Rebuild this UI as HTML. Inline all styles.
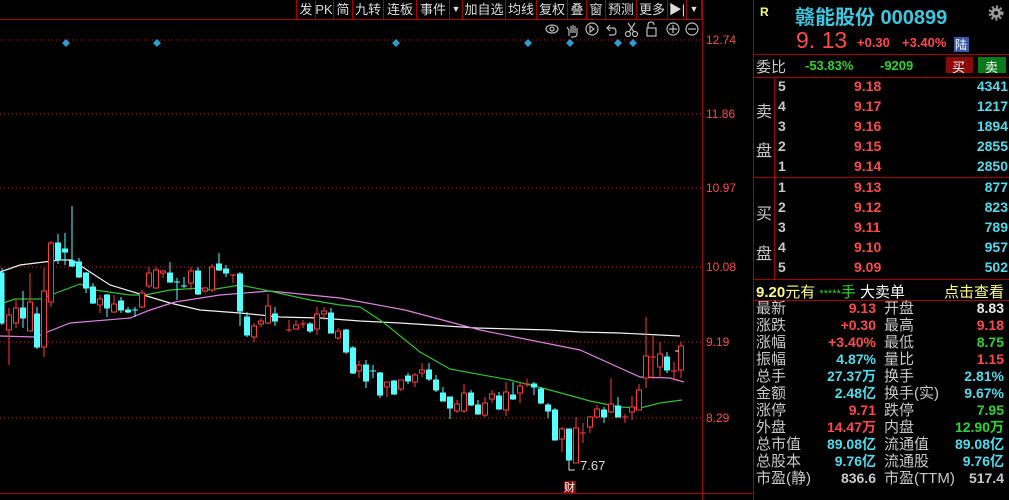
<!DOCTYPE html>
<html><head><meta charset="utf-8"><style>
body{margin:0;background:#000;width:1009px;height:500px;overflow:hidden;position:relative;font-family:"Liberation Sans","Noto Sans CJK SC",sans-serif;}
.tb{position:absolute;top:0;height:19px;border-right:1px solid #a00;color:#ddd;font-size:13px;line-height:19px;text-align:center;}
.abs{position:absolute;white-space:nowrap;}
.hl{position:absolute;left:753px;width:256px;height:1px;background:#a00;}
.r{color:#ff4a4a}.g{color:#2ed52e}.c{color:#4fdcec}.w{color:#e8e8e8}.y{color:#ffff80}.gr{color:#c8c8c8}
.row{position:absolute;left:756px;width:250px;height:17px;font-size:15px;line-height:17px;}
.row span{position:absolute;white-space:nowrap;}
.row span.v{font-weight:bold;font-size:14px;}
.row span.a{right:130px}
.row span.b{right:2px}
.row span.l2{left:128px}
.ob{position:absolute;left:776px;width:232px;height:20px;font-size:14px;font-weight:bold;line-height:20px;}
.ob span{position:absolute;}
</style></head><body>
<svg width="1009" height="500" style="position:absolute;left:0;top:0">
<g stroke="#b02020" stroke-dasharray="1,3" stroke-width="1">
<line x1="0" y1="40" x2="702" y2="40"/><line x1="0" y1="114" x2="702" y2="114"/><line x1="0" y1="188" x2="702" y2="188"/><line x1="0" y1="267" x2="702" y2="267"/><line x1="0" y1="342" x2="702" y2="342"/><line x1="0" y1="418" x2="702" y2="418"/>
</g>
<line x1="0" y1="19.5" x2="702" y2="19.5" stroke="#a00"/>
<line x1="702.5" y1="0" x2="702.5" y2="500" stroke="#a00"/>
<line x1="753.5" y1="0" x2="753.5" y2="500" stroke="#a00"/>
<line x1="0" y1="493.5" x2="753" y2="493.5" stroke="#a00"/>
<g fill="none" stroke-width="1.2">
<polyline stroke="#f0f0f0" points="0,272 20,265 60,260 72,260 90,272 110,285 150,297 170,303 200,310 240,313 280,317 320,318 360,321 400,323 477,328 550,330 580,332 620,333 680,336"/>
<polyline stroke="#e080e0" points="0,336 35,337 45,333 70,323 130,318 150,310 175,302 220,295 270,291 310,295 340,298 405,310 480,330 580,350 620,368 640,377 670,378 684,382"/>
<polyline stroke="#2fc02f" points="0,304 15,299 40,299 80,284 95,290 130,295 145,295 170,290 200,288 210,290 240,285 265,290 310,300 340,305 360,307 383,322 420,352 450,369 510,380 550,390 590,401 620,407 640,408 660,403 682,400"/>
</g>
<g id="c" stroke-width="1">
<g stroke="#54ffff" fill="#54ffff">
<line x1="2" y1="268" x2="2" y2="325"/><rect x="0" y="273" width="4" height="50"/>
<line x1="23" y1="291" x2="23" y2="328"/><rect x="20.5" y="308" width="5" height="10"/>
<line x1="37" y1="307" x2="37" y2="349"/><rect x="34.5" y="314" width="5" height="33"/>
<line x1="58" y1="234" x2="58" y2="264"/><rect x="55.5" y="243" width="5" height="17"/>
<line x1="65" y1="233" x2="65" y2="265"/><rect x="62.5" y="249" width="5" height="3"/>
<line x1="72" y1="206" x2="72" y2="267"/><rect x="69.5" y="261" width="5" height="5"/>
<line x1="79" y1="258" x2="79" y2="278"/><rect x="76.5" y="262" width="5" height="15"/>
<line x1="86" y1="272" x2="86" y2="293"/><rect x="83.5" y="273" width="5" height="15"/>
<line x1="93" y1="283" x2="93" y2="304"/><rect x="90.5" y="287" width="5" height="16"/>
<line x1="107" y1="294" x2="107" y2="317"/><rect x="104.5" y="295" width="5" height="13"/>
<line x1="121" y1="297" x2="121" y2="313"/><rect x="118.5" y="301" width="5" height="9"/>
<line x1="128" y1="307" x2="128" y2="313"/><rect x="125.5" y="310" width="5" height="2"/>
<line x1="135" y1="307" x2="135" y2="317"/><line x1="132" y1="310" x2="138" y2="310"/>
<line x1="170" y1="262" x2="170" y2="283"/><rect x="167.5" y="273" width="5" height="9"/>
<line x1="177" y1="278" x2="177" y2="300"/><line x1="174" y1="282" x2="180" y2="282"/>
<line x1="184" y1="277" x2="184" y2="288"/><line x1="181" y1="286" x2="187" y2="286"/>
<line x1="198" y1="267" x2="198" y2="295"/><rect x="195.5" y="271" width="5" height="23"/>
<line x1="219" y1="253" x2="219" y2="271"/><rect x="216.5" y="264" width="5" height="6"/>
<line x1="226" y1="265" x2="226" y2="277"/><rect x="223.5" y="269" width="5" height="4"/>
<line x1="240" y1="272" x2="240" y2="326"/><rect x="237.5" y="274" width="5" height="37"/>
<line x1="247" y1="312" x2="247" y2="337"/><rect x="244.5" y="317" width="5" height="18"/>
<line x1="275" y1="307" x2="275" y2="326"/><rect x="272.5" y="314" width="5" height="7"/>
<line x1="310" y1="322" x2="310" y2="333"/><rect x="307.5" y="324" width="5" height="7"/>
<line x1="331" y1="308" x2="331" y2="333"/><rect x="328.5" y="313" width="5" height="20"/>
<line x1="346" y1="329" x2="346" y2="354"/><rect x="343.5" y="330" width="5" height="22"/>
<line x1="353" y1="346" x2="353" y2="374"/><rect x="350.5" y="348" width="5" height="25"/>
<line x1="366" y1="360" x2="366" y2="388"/><rect x="363.5" y="365" width="5" height="16"/>
<line x1="373" y1="365" x2="373" y2="378"/><line x1="370" y1="371" x2="376" y2="371"/>
<line x1="380" y1="372" x2="380" y2="398"/><rect x="377.5" y="373" width="5" height="22"/>
<line x1="394" y1="380" x2="394" y2="395"/><rect x="391.5" y="381" width="5" height="13"/>
<line x1="408" y1="373" x2="408" y2="384"/><rect x="405.5" y="376" width="5" height="5"/>
<line x1="429" y1="363" x2="429" y2="381"/><rect x="426.5" y="370" width="5" height="9"/>
<line x1="436" y1="375" x2="436" y2="392"/><rect x="433.5" y="380" width="5" height="10"/>
<line x1="443" y1="387" x2="443" y2="401"/><rect x="440.5" y="393" width="5" height="8"/>
<line x1="450" y1="397" x2="450" y2="419"/><rect x="447.5" y="397" width="5" height="11"/>
<line x1="471" y1="390" x2="471" y2="406"/><rect x="468.5" y="393" width="5" height="12"/>
<line x1="478" y1="400" x2="478" y2="415"/><rect x="475.5" y="405" width="5" height="9"/>
<line x1="499" y1="392" x2="499" y2="410"/><rect x="496.5" y="396" width="5" height="13"/>
<line x1="513" y1="382" x2="513" y2="400"/><rect x="510.5" y="395" width="5" height="4"/>
<line x1="534" y1="382" x2="534" y2="395"/><rect x="531.5" y="384" width="5" height="3"/>
<line x1="541" y1="387" x2="541" y2="404"/><rect x="538.5" y="389" width="5" height="14"/>
<line x1="548" y1="403" x2="548" y2="418"/><rect x="545.5" y="405" width="5" height="6"/>
<line x1="555" y1="408" x2="555" y2="440"/><rect x="552.5" y="410" width="5" height="30"/>
<line x1="569" y1="429" x2="569" y2="470"/><rect x="566.5" y="429" width="5" height="31"/>
<line x1="604" y1="407" x2="604" y2="423"/><rect x="601.5" y="410" width="5" height="7"/>
<line x1="618" y1="397" x2="618" y2="417"/><rect x="615.5" y="406" width="5" height="11"/>
<line x1="667" y1="352" x2="667" y2="373"/><rect x="664.5" y="357" width="5" height="13"/>
</g>
<g stroke="#ff3c3c" fill="#000">
<line x1="9" y1="308" x2="9" y2="365"/><rect x="6.5" y="315" width="5" height="15"/>
<line x1="16" y1="300" x2="16" y2="328"/><rect x="13.5" y="308" width="5" height="15"/>
<line x1="30" y1="273" x2="30" y2="331"/><rect x="27.5" y="302" width="5" height="29"/>
<line x1="44" y1="268" x2="44" y2="357"/><rect x="41.5" y="291" width="5" height="56"/>
<line x1="51" y1="241" x2="51" y2="307"/><rect x="48.5" y="243" width="5" height="59"/>
<line x1="100" y1="295" x2="100" y2="313"/><rect x="97.5" y="299" width="5" height="6"/>
<line x1="114" y1="295" x2="114" y2="313"/><rect x="111.5" y="304" width="5" height="8"/>
<line x1="142" y1="290" x2="142" y2="308"/><rect x="139.5" y="293" width="5" height="14"/>
<line x1="149" y1="267" x2="149" y2="288"/><rect x="146.5" y="273" width="5" height="13"/>
<line x1="156" y1="267" x2="156" y2="289"/><rect x="153.5" y="270" width="5" height="18"/>
<line x1="163" y1="270" x2="163" y2="278"/><rect x="160.5" y="271" width="5" height="2"/>
<line x1="191" y1="267" x2="191" y2="290"/><rect x="188.5" y="271" width="5" height="12"/>
<line x1="205" y1="287" x2="205" y2="293"/><rect x="202.5" y="288" width="5" height="3"/>
<line x1="212" y1="264" x2="212" y2="292"/><rect x="209.5" y="267" width="5" height="23"/>
<line x1="233" y1="274" x2="233" y2="283"/><line x1="230" y1="275" x2="236" y2="275"/>
<line x1="254" y1="323" x2="254" y2="342"/><rect x="251.5" y="326" width="5" height="11"/>
<line x1="261" y1="318" x2="261" y2="327"/><rect x="258.5" y="321" width="5" height="3"/>
<line x1="268" y1="294" x2="268" y2="324"/><rect x="265.5" y="306" width="5" height="17"/>
<line x1="289" y1="320" x2="289" y2="332"/><line x1="286" y1="330" x2="292" y2="330"/>
<line x1="296" y1="320" x2="296" y2="330"/><rect x="293.5" y="325" width="5" height="4"/>
<line x1="303" y1="320" x2="303" y2="328"/><line x1="300" y1="324" x2="306" y2="324"/>
<line x1="317" y1="307" x2="317" y2="335"/><rect x="314.5" y="314" width="5" height="15"/>
<line x1="324" y1="307" x2="324" y2="320"/><rect x="321.5" y="311" width="5" height="3"/>
<line x1="338" y1="328" x2="338" y2="340"/><rect x="335.5" y="331" width="5" height="7"/>
<line x1="359" y1="361" x2="359" y2="378"/><rect x="356.5" y="365" width="5" height="6"/>
<line x1="387" y1="382" x2="387" y2="397"/><rect x="384.5" y="382" width="5" height="5"/>
<line x1="401" y1="380" x2="401" y2="391"/><rect x="398.5" y="380" width="5" height="9"/>
<line x1="415" y1="373" x2="415" y2="387"/><rect x="412.5" y="375" width="5" height="7"/>
<line x1="422" y1="363" x2="422" y2="377"/><rect x="419.5" y="370" width="5" height="3"/>
<line x1="457" y1="400" x2="457" y2="413"/><rect x="454.5" y="404" width="5" height="7"/>
<line x1="464" y1="384" x2="464" y2="413"/><rect x="461.5" y="393" width="5" height="18"/>
<line x1="485" y1="397" x2="485" y2="417"/><rect x="482.5" y="403" width="5" height="12"/>
<line x1="492" y1="390" x2="492" y2="403"/><rect x="489.5" y="394" width="5" height="5"/>
<line x1="506" y1="382" x2="506" y2="416"/><rect x="503.5" y="392" width="5" height="18"/>
<line x1="520" y1="383" x2="520" y2="403"/><rect x="517.5" y="386" width="5" height="7"/>
<line x1="527" y1="379" x2="527" y2="387"/><line x1="524" y1="384" x2="530" y2="384"/>
<line x1="562" y1="427" x2="562" y2="452"/><rect x="559.5" y="429" width="5" height="10"/>
<line x1="576" y1="417" x2="576" y2="463"/><rect x="573.5" y="428" width="5" height="35"/>
<line x1="583" y1="423" x2="583" y2="443"/><line x1="580" y1="433" x2="586" y2="433"/>
<line x1="590" y1="416" x2="590" y2="433"/><rect x="587.5" y="417" width="5" height="10"/>
<line x1="597" y1="405" x2="597" y2="418"/><rect x="594.5" y="409" width="5" height="8"/>
<line x1="611" y1="378" x2="611" y2="413"/><rect x="608.5" y="404" width="5" height="8"/>
<line x1="625" y1="414" x2="625" y2="423"/><line x1="622" y1="417" x2="628" y2="417"/>
<line x1="632" y1="396" x2="632" y2="420"/><rect x="629.5" y="407" width="5" height="5"/>
<line x1="639" y1="384" x2="639" y2="410"/><rect x="636.5" y="390" width="5" height="20"/>
<line x1="646" y1="317" x2="646" y2="388"/><rect x="643.5" y="356" width="5" height="22"/>
<line x1="653" y1="336" x2="653" y2="379"/><line x1="650" y1="357" x2="656" y2="357"/>
<line x1="660" y1="342" x2="660" y2="378"/><rect x="657.5" y="354" width="5" height="13"/>
<line x1="674" y1="362" x2="674" y2="381"/><line x1="671" y1="371" x2="677" y2="371"/>
<line x1="681" y1="342" x2="681" y2="378"/><rect x="678.5" y="346" width="5" height="24"/>
</g>
<line x1="675" y1="351" x2="679" y2="351" stroke="#ffff60"/>
</g>
<polyline points="569,462 569,470 575,470" fill="none" stroke="#ddd"/>
<g fill="#2e9ed0">
<path d="M66,39l4,4-4,4-4-4z"/><path d="M157,39l4,4-4,4-4-4z"/><path d="M396,39l4,4-4,4-4-4z"/><path d="M528,39l4,4-4,4-4-4z"/><path d="M570,39l4,4-4,4-4-4z"/><path d="M618,39l4,4-4,4-4-4z"/><path d="M633,39l4,4-4,4-4-4z"/>
</g>
<g fill="none" stroke="#bbb" stroke-width="1.2">
<ellipse cx="552" cy="29" rx="6" ry="4"/><circle cx="552" cy="29" r="2"/>
<path d="M569,36 v-6 l-2,-3 M571,26v7 M573,25v8 M575,26v7 M577,28v6 q0,3 -4,3 h-2"/>
<circle cx="592" cy="29" r="6"/><path d="M590,26 l4,3 -4,3z"/>
<path d="M610,25 l-3,3 3,3 M607,28 h6 q3,0 3,4 q0,3 -3,3 h-4"/>
<circle cx="628" cy="34" r="2.5"/><circle cx="635" cy="34" r="2.5"/><path d="M629,32 l6,-9 M634,32 l-6,-9"/>
<rect x="647" y="28" width="9" height="8"/><path d="M648,28 v-3 q0,-3 3,-3 q3,0 3,3"/>
<circle cx="673" cy="29" r="6"/><path d="M669,29h8M673,25v8"/>
<circle cx="692" cy="29" r="6"/><path d="M688,29h8"/>
</g>
<rect x="564" y="481" width="12" height="12" fill="#7a0d0d"/>
<g fill="#999"><circle cx="996" cy="13" r="5"/></g>
<circle cx="996" cy="13" r="6" fill="none" stroke="#999" stroke-width="3" stroke-dasharray="2,2"/>
<circle cx="996" cy="13" r="2" fill="#000"/>
<rect x="946" y="57" width="27" height="16" fill="#8a0a0a"/><rect x="978" y="57" width="28" height="16" fill="#0a7a1a"/>
<rect x="954" y="37" width="15" height="15" fill="#3a5aa8"/>
<line x1="774.5" y1="78" x2="774.5" y2="279" stroke="#a00"/>
</svg>
<div class="abs w" style="left:580px;top:458px;font-size:13px;color:#ddd">7.67</div>
<div class="abs" style="left:564px;top:479px;font-size:11px;color:#fff">财</div>
<div class="tb" style="left:296px;width:18px;border-left:1px solid #a00">发</div>
<div class="tb" style="left:315px;width:18px">PK</div>
<div class="tb" style="left:334px;width:18px">简</div>
<div class="tb" style="left:353px;width:30px">九转</div>
<div class="tb" style="left:384px;width:32px">连板</div>
<div class="tb" style="left:417px;width:32px">事件</div>
<div class="tb" style="left:450px;width:12px;font-size:9px">▼</div>
<div class="tb" style="left:463px;width:42px">加自选</div>
<div class="tb" style="left:506px;width:30px">均线</div>
<div class="tb" style="left:537px;width:30px">复权</div>
<div class="tb" style="left:568px;width:18px">叠</div>
<div class="tb" style="left:587px;width:18px">窗</div>
<div class="tb" style="left:606px;width:30px">预测</div>
<div class="tb" style="left:637px;width:30px">更多</div>
<div class="tb" style="left:668px;width:18px">▶|</div>
<div class="tb" style="left:687px;width:14px;font-size:9px">▼</div>
<div class="abs r" style="left:706px;top:33px;font-size:12px">12.74</div>
<div class="abs r" style="left:706px;top:107px;font-size:12px">11.86</div>
<div class="abs r" style="left:706px;top:181px;font-size:12px">10.97</div>
<div class="abs r" style="left:706px;top:260px;font-size:12px">10.08</div>
<div class="abs r" style="left:706px;top:335px;font-size:12px">9.19</div>
<div class="abs r" style="left:706px;top:411px;font-size:12px">8.29</div>
<div class="abs" style="left:760px;top:5px;font-size:12px;font-weight:bold;color:#ffff60">R</div>
<div class="abs c" style="left:795px;top:1px;font-size:20px;font-weight:bold;color:#3cc8e0">赣能股份 000899</div>
<div class="abs r" style="left:796px;top:27px;font-size:23px">9. 13</div>
<div class="abs r" style="left:857px;top:35px;font-size:13px;font-weight:bold">+0.30</div>
<div class="abs r" style="left:902px;top:35px;font-size:13px;font-weight:bold">+3.40%</div>
<div class="abs" style="left:955px;top:36px;font-size:12px;color:#fff">陆</div>
<div class="hl" style="top:54px"></div>
<div class="abs gr" style="left:756px;top:56px;font-size:15px">委比</div>
<div class="abs g" style="left:805px;top:58px;font-size:13px;font-weight:bold">-53.83%</div>
<div class="abs g" style="left:880px;top:58px;font-size:13px;font-weight:bold">-9209</div>
<div class="abs" style="left:952px;top:57px;font-size:13px;color:#fff">买</div>
<div class="abs" style="left:985px;top:57px;font-size:13px;color:#fff">卖</div>
<div class="hl" style="top:77px"></div>
<div class="abs gr" style="left:756px;top:98px;font-size:16px">卖</div>
<div class="abs gr" style="left:756px;top:137px;font-size:16px">盘</div>
<div class="ob" style="top:76px"><span class="gr" style="left:2px">5</span><span class="r" style="left:78px">9.18</span><span class="c" style="right:0">4341</span></div>
<div class="ob" style="top:96px"><span class="gr" style="left:2px">4</span><span class="r" style="left:78px">9.17</span><span class="c" style="right:0">1217</span></div>
<div class="ob" style="top:116px"><span class="gr" style="left:2px">3</span><span class="r" style="left:78px">9.16</span><span class="c" style="right:0">1894</span></div>
<div class="ob" style="top:136px"><span class="gr" style="left:2px">2</span><span class="r" style="left:78px">9.15</span><span class="c" style="right:0">2855</span></div>
<div class="ob" style="top:156px"><span class="gr" style="left:2px">1</span><span class="r" style="left:78px">9.14</span><span class="c" style="right:0">2850</span></div>
<div class="hl" style="top:177px"></div>
<div class="abs gr" style="left:756px;top:200px;font-size:16px">买</div>
<div class="abs gr" style="left:756px;top:240px;font-size:16px">盘</div>
<div class="ob" style="top:177px"><span class="gr" style="left:2px">1</span><span class="r" style="left:78px">9.13</span><span class="c" style="right:0">877</span></div>
<div class="ob" style="top:197px"><span class="gr" style="left:2px">2</span><span class="r" style="left:78px">9.12</span><span class="c" style="right:0">823</span></div>
<div class="ob" style="top:217px"><span class="gr" style="left:2px">3</span><span class="r" style="left:78px">9.11</span><span class="c" style="right:0">789</span></div>
<div class="ob" style="top:237px"><span class="gr" style="left:2px">4</span><span class="r" style="left:78px">9.10</span><span class="c" style="right:0">957</span></div>
<div class="ob" style="top:257px"><span class="gr" style="left:2px">5</span><span class="r" style="left:78px">9.09</span><span class="c" style="right:0">502</span></div>
<div class="hl" style="top:279px"></div>
<div class="abs y" style="left:756px;top:281px;font-size:15px"><b>9.20</b>元有 <span class="g" style="font-size:11px">*****</span><span class="g">手</span> <span style="color:#fff">大卖单</span></div>
<div class="abs y" style="left:944px;top:281px;font-size:15px">点击查看</div>
<div class="hl" style="top:300px"></div>
<div style="position:absolute;left:0;top:300px">
<div class="row" style="top:0"><span class="gr" style="left:0">最新</span><span class="v a r">9.13</span><span class="gr l2">开盘</span><span class="v b w">8.83</span></div>
<div class="row" style="top:17px"><span class="gr" style="left:0">涨跌</span><span class="v a r">+0.30</span><span class="gr l2">最高</span><span class="v b r">9.18</span></div>
<div class="row" style="top:34px"><span class="gr" style="left:0">涨幅</span><span class="v a r">+3.40%</span><span class="gr l2">最低</span><span class="v b g">8.75</span></div>
<div class="row" style="top:51px"><span class="gr" style="left:0">振幅</span><span class="v a c">4.87%</span><span class="gr l2">量比</span><span class="v b r">1.15</span></div>
<div class="row" style="top:68px"><span class="gr" style="left:0">总手</span><span class="v a c">27.37万</span><span class="gr l2">换手</span><span class="v b c">2.81%</span></div>
<div class="row" style="top:85px"><span class="gr" style="left:0">金额</span><span class="v a c">2.48亿</span><span class="gr l2">换手(实)</span><span class="v b c">9.67%</span></div>
<div class="row" style="top:102px"><span class="gr" style="left:0">涨停</span><span class="v a r">9.71</span><span class="gr l2">跌停</span><span class="v b g">7.95</span></div>
<div class="row" style="top:119px"><span class="gr" style="left:0">外盘</span><span class="v a r">14.47万</span><span class="gr l2">内盘</span><span class="v b g">12.90万</span></div>
<div class="row" style="top:136px"><span class="gr" style="left:0">总市值</span><span class="v a c">89.08亿</span><span class="gr l2">流通值</span><span class="v b c">89.08亿</span></div>
<div class="row" style="top:153px"><span class="gr" style="left:0">总股本</span><span class="v a c">9.76亿</span><span class="gr l2">流通股</span><span class="v b c">9.76亿</span></div>
<div class="row" style="top:170px"><span class="gr" style="left:0">市盈(静)</span><span class="v a gr">836.6</span><span class="gr l2">市盈(TTM)</span><span class="v b gr">517.4</span></div>
</div>
</body></html>
